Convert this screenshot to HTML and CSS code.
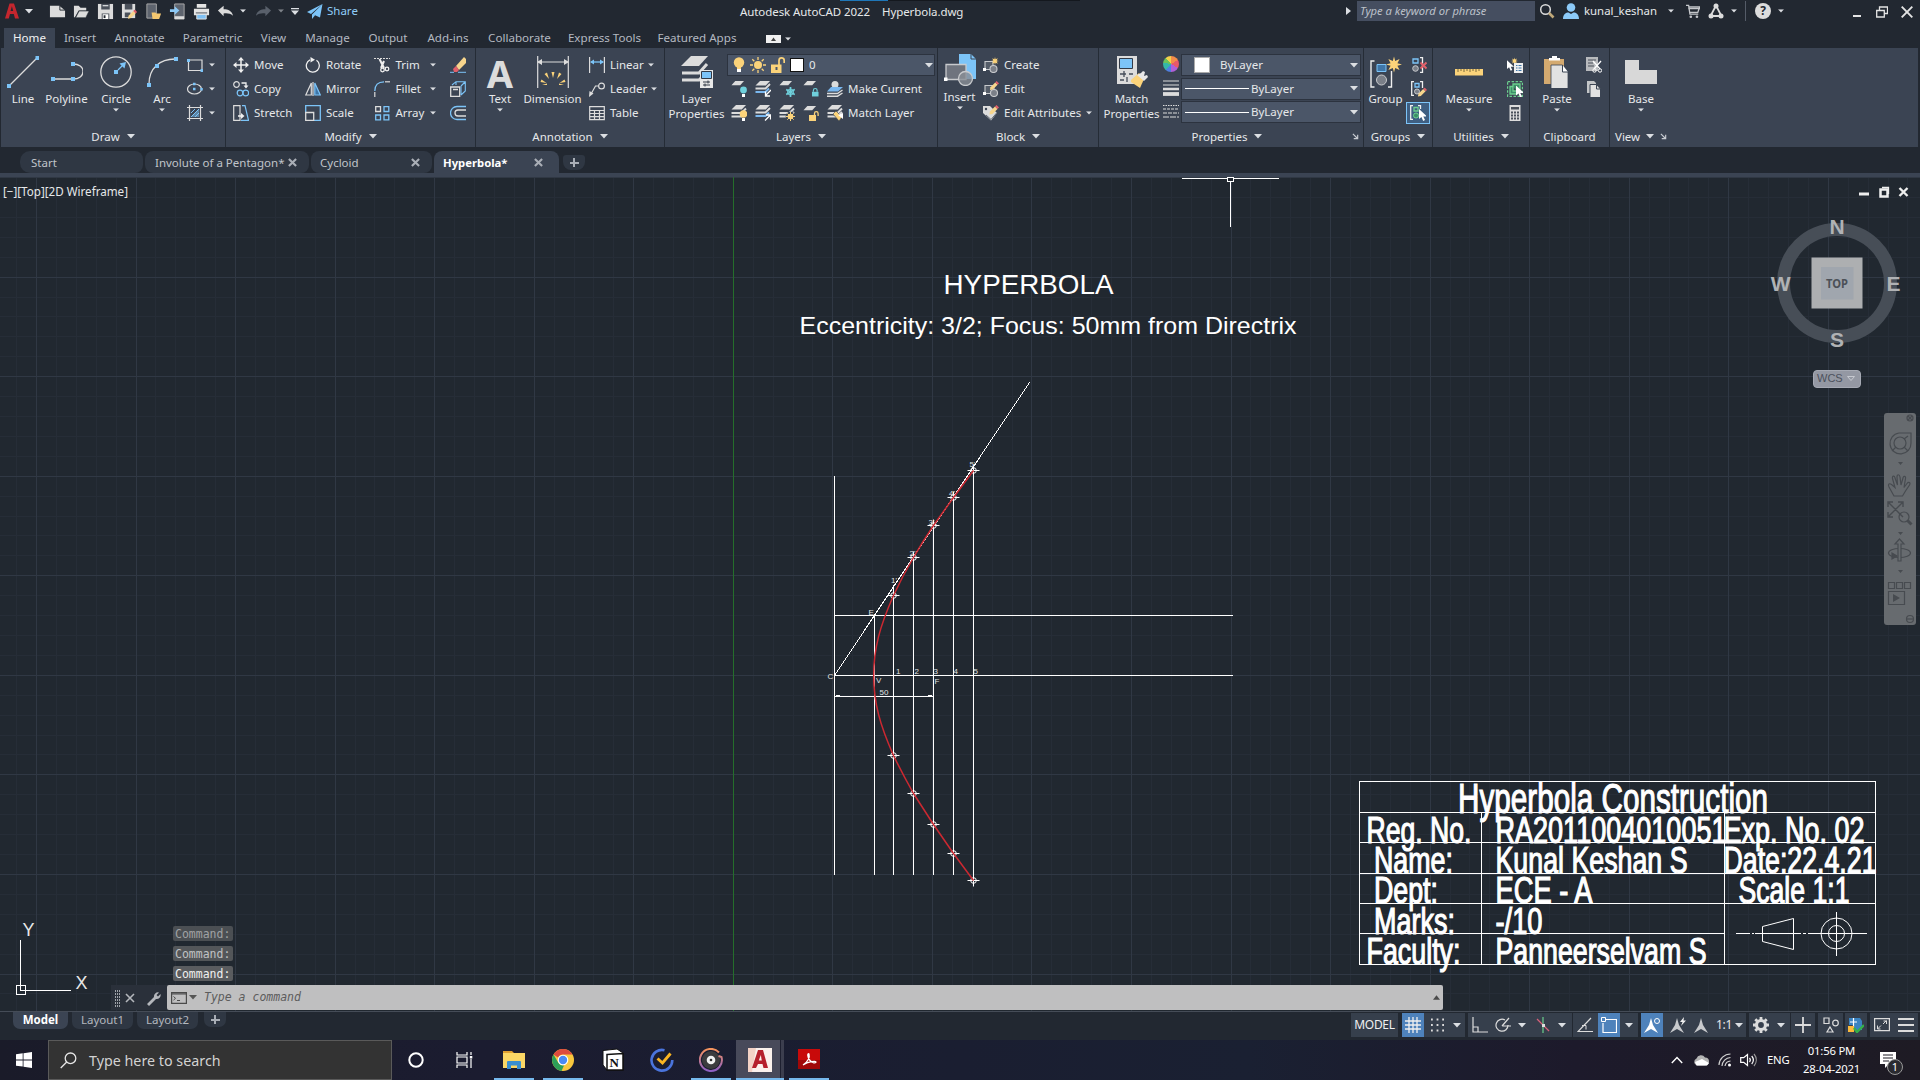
FILE: index.html
```html
<!DOCTYPE html>
<html lang="en">
<head>
<meta charset="utf-8">
<title>Autodesk AutoCAD 2022 - Hyperbola.dwg</title>
<link rel="stylesheet" href="styles.css">
</head>
<body>
<svg class="defs" width="0" height="0">
  <symbol id="dn" viewBox="0 0 8 5"><path d="M0 0h8L4 4.6z" fill="#dcdfe3"/></symbol>
  <symbol id="star" viewBox="0 0 16 16"><path d="M8 0l1.2 4.6L13.6 2.4 11.4 6.8 16 8l-4.600 1.200 2.200 4.400-4.400-2.200L8 16l-1.200-4.600-4.400 2.200 2.200-4.400L0 8l4.600-1.200L2.400 2.400l4.400 2.200z" fill="#fbd37a"/></symbol>
  <symbol id="pencil" viewBox="0 0 10 10"><path d="M1 6.500L6 1.500 8.500 4 3.500 9 .4 9.600z" fill="#f7d58c"/><path d="M6 1.500L7.500 0 10 2.500 8.500 4z" fill="#e0606a"/></symbol>
  <symbol id="sheet" viewBox="0 0 16 16"><path d="M5 1h10l-4.500 5H.5z" fill="#dcdcdc"/></symbol>
  <symbol id="sheets" viewBox="0 0 16 16"><path d="M5 0h10l-4.200 4.500H.5z" fill="#dcdcdc"/><path d="M.5 8h10L15 3.500M.5 11.500h10L15 7" fill="none" stroke="#dcdcdc" stroke-width="2"/></symbol>
  <symbol id="sheetsb" viewBox="0 0 16 16"><path d="M5 0h10l-4.200 4.500H.5z" fill="#dcdcdc"/><path d="M.5 7.500h10L15 3" fill="none" stroke="#dcdcdc" stroke-width="1.800"/><path d="M.5 11h10L14 7.500" fill="none" stroke="#7ab8f0" stroke-width="2"/></symbol>
  <symbol id="launch" viewBox="0 0 8 8"><path d="M1 1l5 5M6.500 2v4.500H2" fill="none" stroke="#c8ccd2" stroke-width="1.300"/></symbol>
  <symbol id="cursor" viewBox="0 0 8 12"><path d="M0 0v10l2.400-2 1.800 4 1.800-.9-1.700-3.700H8z" fill="#fff"/></symbol>
  <symbol id="x" viewBox="0 0 8 8"><path d="M.8.800l6.400 6.400M7.200.800L.8 7.200" stroke="#a9aeb6" stroke-width="1.900" fill="none"/></symbol>
  <symbol id="lock" viewBox="0 0 8 9"><path d="M2 4V2.500a2 2 0 014 0V4" fill="none" stroke="#6fd0dc" stroke-width="1.300"/><rect x=".5" y="4" width="7" height="5" fill="#6fd0dc"/></symbol>
</svg>

<header class="titlebar">
  <div class="qat">
    <svg class="logo" viewBox="0 0 16 18" width="16" height="18"><path d="M1 16.500L5.500 1.500h4.500L15 16.500h-4l-1.200-4.500H6L4.800 16.500z" fill="#c4262e"/><path d="M6.600 9h2.600L7.900 4.200z" fill="#222831"/></svg>
    <svg class="dn" viewBox="0 0 8 5"><use href="#dn"/></svg>
    <svg class="q q-new" viewBox="0 0 18 18"><path d="M1 3h10l6 5v7H1z" fill="#dcdcdc"/><path d="M11.500 3v4.500H17" fill="none" stroke="#222831"/></svg>
    <svg class="q" viewBox="0 0 18 18"><path d="M1 15V3h5l2 2h6v3H6l-4 7z" fill="#dcdcdc"/><path d="M6.500 8.500H17l-3.500 7H2.800z" fill="#dcdcdc" stroke="#222831" stroke-width=".6"/></svg>
    <svg class="q" viewBox="0 0 18 18"><path d="M1 1h16v16H1z" fill="#dcdcdc"/><path d="M4.500 1h9v6h-9zM5 11h8v6H5z" fill="#4a505a"/><path d="M6 12h6v5H6zM6 2.500h6v1H6z" fill="#fff"/><path d="M7 13h2v3H7z" fill="#222831"/></svg>
    <svg class="q" viewBox="0 0 18 18"><path d="M1 1h14v15H1z" fill="#dcdcdc"/><path d="M4 1h8v6H4zM4 10h6v5H4z" fill="#4a505a"/><use href="#pencil" x="7" y="7" width="10" height="10"/></svg>
    <svg class="q" viewBox="0 0 18 18"><path d="M2 1h10v15H2z" fill="#5e646e" stroke="#aaa"/><path d="M7 10h4l1 1h5l-2 6H8z" fill="#f5c870"/></svg>
    <svg class="q" viewBox="0 0 18 18"><path d="M6 1h10v16H6z" fill="#5e646e" stroke="#aaa"/><path d="M6 14h10v3H6z" fill="#dcdcdc"/><path d="M1 6.500h5V3.500L11 8l-5 4.500V9.500H1z" fill="#8cc8f5"/></svg>
    <svg class="q" viewBox="0 0 18 18"><path d="M4 1h10v4H4zM1 6h16v7H1z" fill="#e4e4e4"/><path d="M4 12h10v5H4z" fill="#7fc0f3" stroke="#e4e4e4"/><path d="M3 10h12v1H3z" fill="#4a505a"/></svg>
    <svg class="q q-undo" viewBox="0 0 18 18"><path d="M1 8l6-5v3.500c5 0 9 2 10 7-3-2.500-6-3-10-2.500V14z" fill="#dcdcdc"/></svg>
    <svg class="dn s" viewBox="0 0 8 5"><use href="#dn"/></svg>
    <svg class="q" viewBox="0 0 18 18"><path d="M17 8l-6-5v3.500c-5 0-9 2-10 7 3-2.500 6-3 10-2.500V14z" fill="#59606b"/></svg>
    <svg class="dn s dim" viewBox="0 0 8 5"><use href="#dn"/></svg>
    <svg class="cust" viewBox="0 0 8 7" width="8" height="7"><path d="M0 0h8v1.300H0zM0 2.500h8L4 7z" fill="#dcdfe3"/></svg>
    <svg class="plane" viewBox="0 0 16 15" width="16" height="15"><path d="M15.500 0L0 8l4 2zM15.500 0L5 10.500V15l2.500-3zM15.500 0l-8 11L13 13.500z" fill="#7cc4f8"/></svg>
    <span class="share">Share</span>
  </div>
  <div class="apptitle"><span>Autodesk AutoCAD 2022</span><span>Hyperbola.dwg</span></div>
  <div class="infocenter">
    <svg viewBox="0 0 5 8" width="5" height="8"><path d="M0 0l5 4-5 4z" fill="#dcdfe3"/></svg>
    <div class="keyword">Type a keyword or phrase</div>
    <svg class="mag" viewBox="0 0 16 16" width="16" height="16"><circle cx="6.500" cy="6.500" r="4.800" fill="none" stroke="#dcdcdc" stroke-width="1.500"/><path d="M10 10l4.500 4.500" stroke="#c0a878" stroke-width="2.600"/></svg>
    <svg class="user" viewBox="0 0 16 16" width="16" height="16"><circle cx="8" cy="4.500" r="4.300" fill="#8ccaf8"/><path d="M0 16c0-5 3-6.500 5.500-6.500L8 11l2.500-1.500C13 9.500 16 11 16 16z" fill="#8ccaf8"/></svg>
    <span class="uname">kunal_keshan</span>
    <svg class="dn s" viewBox="0 0 8 5"><use href="#dn"/></svg>
    <svg class="cart" viewBox="0 0 16 16" width="14" height="15"><path d="M0 1h3l1.500 10H14M3.600 4.500H15L13.500 9H4.300M3.300 2.800h12v2h-12z" fill="none" stroke="#c4c6ca" stroke-width="1.500"/><circle cx="5.500" cy="14" r="1.500" fill="#c4c6ca"/><circle cx="12.500" cy="14" r="1.500" fill="#c4c6ca"/></svg>
    <svg class="adsk" viewBox="0 0 16 16" width="16" height="16"><path d="M8 2.500L2.500 13H13.500z" fill="none" stroke="#dcdcdc" stroke-width="1.800"/><circle cx="8" cy="3" r="2.500" fill="#dcdcdc"/><circle cx="3" cy="13" r="2.500" fill="#dcdcdc"/><circle cx="13" cy="13" r="2.500" fill="#dcdcdc"/></svg>
    <svg class="dn s" viewBox="0 0 8 5"><use href="#dn"/></svg>
    <i class="vsep"></i>
    <span class="help">?</span>
    <svg class="dn s" viewBox="0 0 8 5"><use href="#dn"/></svg>
  </div>
  <div class="winbtns">
    <svg viewBox="0 0 12 12" width="12" height="12"><path d="M2 10h8" stroke="#e4e4e4" stroke-width="2"/></svg>
    <svg viewBox="0 0 12 12" width="12" height="12"><path d="M3.500 4V1h8v6.500H8.500M.7 4.500h7.600v6.500H.7z" fill="none" stroke="#e4e4e4" stroke-width="1.300"/></svg>
    <svg viewBox="0 0 12 12" width="12" height="12"><path d="M.7.700l10.600 10.600M11.300.700L.7 11.300" stroke="#e4e4e4" stroke-width="1.900"/></svg>
  </div>
  <i class="topline"></i>
</header>

<nav class="ribtabs">
  <span class="on">Home</span><span>Insert</span><span>Annotate</span><span>Parametric</span><span>View</span><span>Manage</span><span>Output</span><span>Add-ins</span><span>Collaborate</span><span>Express Tools</span><span>Featured Apps</span>
  <span class="ribmin"><svg viewBox="0 0 15 8" width="15" height="8"><path d="M0 0h15v8H0z" fill="#f0f0f0"/><path d="M5 6l2.500-3.500L10 6z" fill="#444"/></svg><svg class="dn s" viewBox="0 0 8 5"><use href="#dn"/></svg></span>
</nav>

<section class="ribbon">
  <div class="panel p-draw">
    <div class="body">
      <div class="big w42"><svg viewBox="0 0 32 32"><path d="M2 30L30 2" stroke="#dcdcdc" stroke-width="1.300"/><path d="M0 28h4v4H0zM28.500 0h4v4h-4z" fill="#7cc4f8"/></svg><span>Line</span></div>
      <div class="big w44"><svg viewBox="0 0 32 32"><path d="M2 23h20c6 0 10-3 10-7.500S28 8 22 8" fill="none" stroke="#dcdcdc" stroke-width="1.300"/><path d="M0 21h4v4H0zM20 21h4v4h-4zM20 6h4v4h-4z" fill="#7cc4f8"/></svg><span>Polyline</span></div>
      <div class="big w56"><svg viewBox="0 0 32 32"><circle cx="16" cy="16" r="15.200" fill="none" stroke="#dcdcdc" stroke-width="1.300"/><path d="M18 14l6-6" stroke="#7cc4f8" stroke-width="1.300"/><path d="M14 14h4v4h-4zM19.500 7.500L26 6l-1.500 6.500z" fill="#7cc4f8"/></svg><span>Circle</span><svg class="dn s" viewBox="0 0 8 5"><use href="#dn"/></svg></div>
      <div class="big w36"><svg viewBox="0 0 32 32"><path d="M3 28C3 12 14 3 29 3" fill="none" stroke="#dcdcdc" stroke-width="1.300"/><path d="M1 27h4v4H1zM9 8h4v4H9zM28 1h4v4h-4z" fill="#7cc4f8"/></svg><span>Arc</span><svg class="dn s" viewBox="0 0 8 5"><use href="#dn"/></svg></div>
      <div class="rows r-draw">
        <div class="row"><svg viewBox="0 0 16 16"><path d="M2 3h13v10.500H1.500V4.500" fill="none" stroke="#dcdcdc" stroke-width="1.200"/><path d="M0 2h3v3H0zM13.500 12h3v3h-3z" fill="#7cc4f8"/></svg><svg class="dn s" viewBox="0 0 8 5"><use href="#dn"/></svg></div>
        <div class="row"><svg viewBox="0 0 16 16"><ellipse cx="7.500" cy="8" rx="7" ry="5" fill="none" stroke="#dcdcdc" stroke-width="1.200"/><path d="M6 6.800h2.500v2.500H6zM6 1.700h2.500v2.500H6zM13.300 7h2.500v2.500h-2.500z" fill="#7cc4f8"/></svg><svg class="dn s" viewBox="0 0 8 5"><use href="#dn"/></svg></div>
        <div class="row"><svg viewBox="0 0 16 16"><path d="M4 12l8-8v8z" fill="#7cc4f8" opacity=".5"/><path d="M4 8l4-4M4 12l8-8M8 12l4-4" stroke="#7cc4f8"/><path d="M0 2.500h16M0 13.500h16M2.500 0v16M13.500 0v16" stroke="#dcdcdc" stroke-width="1.200"/></svg><svg class="dn s" viewBox="0 0 8 5"><use href="#dn"/></svg></div>
      </div>
    </div>
    <div class="ptitle">Draw<svg class="dn" viewBox="0 0 8 5"><use href="#dn"/></svg></div>
  </div>

  <div class="panel p-modify">
    <div class="body">
      <div class="rows w72">
        <div class="row"><svg viewBox="0 0 16 16"><path d="M8 1v14M1 8h14" stroke="#f0f0f0" stroke-width="1.500"/><path d="M8 0l3 3.500H5zM8 16l3-3.500H5zM0 8l3.500-3v6zM16 8l-3.500-3v6z" fill="#f0f0f0"/></svg><span>Move</span></div>
        <div class="row"><svg viewBox="0 0 16 16"><circle cx="3.500" cy="3.500" r="2.800" fill="none" stroke="#dcdcdc" stroke-width="1.200"/><path d="M8.500 2h4.500v3" fill="none" stroke="#f0f0f0" stroke-width="1.300"/><path d="M10.500 4.500h5L13 7.500z" fill="#f0f0f0"/><circle cx="7" cy="12" r="2.800" fill="none" stroke="#7cc4f8" stroke-width="1.200"/><circle cx="12.800" cy="12" r="2.800" fill="none" stroke="#7cc4f8" stroke-width="1.200"/></svg><span>Copy</span></div>
        <div class="row"><svg viewBox="0 0 16 16"><path d="M.7.700H7v14.600H.7z" fill="none" stroke="#dcdcdc" stroke-width="1.200"/><path d="M9 .7h3l3.500 14.600H8" fill="none" stroke="#7cc4f8" stroke-width="1.200"/><path d="M5 11h4" stroke="#f0f0f0" stroke-width="1.500"/><path d="M8 8l3.500 3L8 14z" fill="#f0f0f0"/></svg><span>Stretch</span></div>
      </div>
      <div class="rows w69">
        <div class="row"><svg viewBox="0 0 16 16"><path d="M5 2.800a6.500 6.500 0 106.500.5" fill="none" stroke="#f0f0f0" stroke-width="1.300"/><path d="M5.500 0v5.500L10 2.700z" fill="#f0f0f0"/></svg><span>Rotate</span></div>
        <div class="row"><svg viewBox="0 0 16 16"><path d="M6.300 2v12H.8zM8 1v14" fill="none" stroke="#dcdcdc" stroke-width="1.200"/><path d="M9.800 2v12h5.500z" fill="#3f76a8" stroke="#7cc4f8" stroke-width="1.200"/></svg><span>Mirror</span></div>
        <div class="row"><svg viewBox="0 0 16 16"><path d="M.7 8V.7h14.600v14.600H9" fill="none" stroke="#7cc4f8" stroke-width="1.300"/><path d="M.7 7.500h8v8h-8z" fill="none" stroke="#dcdcdc" stroke-width="1.300"/></svg><span>Scale</span></div>
      </div>
      <div class="rows w76">
        <div class="row"><svg viewBox="0 0 16 16"><path d="M0 1.500h16" stroke="#dcdcdc" stroke-dasharray="2 1"/><path d="M5.500 2l4.500 9M10 4l-3 7" stroke="#f0f0f0" stroke-width="2"/><circle cx="8.500" cy="13" r="1.800" fill="none" stroke="#f0f0f0" stroke-width="1.300"/><circle cx="13" cy="12" r="1.800" fill="none" stroke="#f0f0f0" stroke-width="1.300"/></svg><span>Trim</span><svg class="dn s e" viewBox="0 0 8 5"><use href="#dn"/></svg></div>
        <div class="row"><svg viewBox="0 0 16 16"><path d="M.8 16v-5" stroke="#dcdcdc" stroke-width="1.200"/><path d="M.8 10C.8 4 4 .8 10 .8" fill="none" stroke="#7cc4f8" stroke-width="1.300"/><path d="M11 .8h5" stroke="#dcdcdc" stroke-width="1.200"/></svg><span>Fillet</span><svg class="dn s e" viewBox="0 0 8 5"><use href="#dn"/></svg></div>
        <div class="row"><svg viewBox="0 0 16 16" fill="none" stroke-width="1.300"><path d="M1.700 1.700h4.800v4.800H1.700z" stroke="#dcdcdc"/><path d="M10 1.700h4.800v4.800H10zM1.700 10h4.800v4.800H1.700zM10 10h4.800v4.800H10z" stroke="#7cc4f8"/></svg><span>Array</span><svg class="dn s e" viewBox="0 0 8 5"><use href="#dn"/></svg></div>
      </div>
      <div class="rows">
        <div class="row"><svg viewBox="0 0 16 16"><path d="M0 15.300h4M8 15.300h8" stroke="#7cc4f8"/><path d="M6 9L14 0l2 2v4L9 13z" fill="#f7d58c"/><path d="M3 12l3-3 3 4-2 2H4z" fill="#e0606a"/></svg></div>
        <div class="row"><svg viewBox="0 0 16 16" fill="none"><path d="M.7 6h9v9.300h-9zM3 8.500h5" stroke="#dcdcdc" stroke-width="1.300"/><path d="M2 4l4-3.300h9.300V10L11 14M6 .7V4M11 5l4-4M11 5v9" stroke="#7cc4f8" stroke-width="1.100"/></svg></div>
        <div class="row"><svg viewBox="0 0 16 16" fill="none"><path d="M16 1.500H7a6.500 6.500 0 000 13h9" stroke="#7cc4f8" stroke-width="1.300"/><path d="M16 5H8a3 3 0 000 6h8" stroke="#dcdcdc" stroke-width="1.300"/></svg></div>
      </div>
    </div>
    <div class="ptitle">Modify<svg class="dn" viewBox="0 0 8 5"><use href="#dn"/></svg></div>
  </div>

  <div class="panel p-anno">
    <div class="body">
      <div class="big w48"><b class="bigA">A</b><span>Text</span><svg class="dn s" viewBox="0 0 8 5"><use href="#dn"/></svg></div>
      <div class="big w57"><svg viewBox="0 0 32 32"><path d="M.7 0v32M31.300 0v32M1 6h30" stroke="#dcdcdc" stroke-width="1.200"/><path d="M0 6l5-3v6zM32 6l-5-3v6z" fill="#dcdcdc"/><path d="M16 22l-1.500-6h3zM12 23l-4.500-5 2.500-1.500zM20 23l4.500-5-2.500-1.500zM9.500 27l-6-1 1-2.500zM22.500 27l6-1-1-2.500zM5 29h5v-1.500zM27 29h-5v-1.500z" fill="#fbd37a"/></svg><span>Dimension</span></div>
      <div class="rows">
        <div class="row"><svg viewBox="0 0 16 16"><path d="M.6 0v16M15.400 0v16" stroke="#dcdcdc" stroke-width="1.200"/><path d="M2 5h12" stroke="#7cc4f8" stroke-width="1.300"/><path d="M1 5l4-2.500v5zM15 5l-4-2.500v5z" fill="#7cc4f8"/></svg><span>Linear</span><svg class="dn s e2 e-lin" viewBox="0 0 8 5"><use href="#dn"/></svg></div>
        <div class="row"><svg viewBox="0 0 16 16"><circle cx="12.500" cy="5" r="2.900" fill="none" stroke="#dcdcdc" stroke-width="1.200"/><path d="M9.500 5H6.500L2 13" fill="none" stroke="#dcdcdc" stroke-width="1.200"/><path d="M0 16l.5-6 4 2.500z" fill="#dcdcdc"/></svg><span>Leader</span><svg class="dn s e2" viewBox="0 0 8 5"><use href="#dn"/></svg></div>
        <div class="row"><svg viewBox="0 0 16 16" fill="none"><path d="M.7 1.700h14.600v13H.7zM.7 5.500h14.600M.7 8.500h14.600M.7 11.700h14.600M5.500 5v10M10.500 5v10" stroke="#dcdcdc" stroke-width="1.200"/></svg><span>Table</span></div>
      </div>
    </div>
    <div class="ptitle">Annotation<svg class="dn" viewBox="0 0 8 5"><use href="#dn"/></svg></div>
  </div>

  <div class="panel p-layers">
    <div class="body">
      <div class="big w64"><svg viewBox="0 0 32 32"><path d="M10 0h17L18 10H0z" fill="#dcdcdc"/><path d="M1 17h17l8-9M1 24h17l3-3" fill="none" stroke="#dcdcdc" stroke-width="3"/><path d="M19 14h13v18H19z" fill="#e8e8e8"/><path d="M20.500 15.500h10v7h-10z" fill="#7cc4f8" stroke="#333b47"/><path d="M22 26h7M22 29h7M27 24.500v3M24 27.500v3" stroke="#333b47"/></svg><span>Layer<br>Properties</span></div>
      <div class="layerside">
        <div class="combo layercombo">
          <svg viewBox="0 0 12 16" width="12" height="16"><circle cx="6" cy="5.500" r="5.200" fill="#fbd37a"/><path d="M4 9h4v3H4z" fill="#fbd37a"/><path d="M4 12h4v3H4z" fill="#fff"/></svg>
          <svg viewBox="0 0 16 16" width="16" height="16"><circle cx="8" cy="8" r="4" fill="#fbd37a"/><path d="M8 0v3M8 13v3M0 8h3M13 8h3M2.300 2.300l2 2M11.700 11.700l2 2M13.700 2.300l-2 2M4.300 11.700l-2 2" stroke="#fbd37a" stroke-width="1.300"/></svg>
          <svg viewBox="0 0 14 16" width="14" height="16"><path d="M0 7.500h10.500V16H0z" fill="#fbd37a"/><path d="M8 8V3.500a2.600 2.600 0 015.200 0V6" fill="none" stroke="#fbd37a" stroke-width="1.700"/><path d="M4.500 10h2v3h-2z" fill="#4b5668"/></svg>
          <i class="swatch"></i><span>0</span><svg class="dn end" viewBox="0 0 8 5"><use href="#dn"/></svg>
        </div>
        <div class="lrow">
          <svg viewBox="0 0 16 16"><use href="#sheet" width="14" height="14" y="-1"/><circle cx="12.500" cy="9" r="3.400" fill="#6fd0dc"/><path d="M11 13h3v3h-3z" fill="#fff"/></svg>
          <svg viewBox="0 0 16 16"><use href="#sheetsb"/><path d="M16 9l-5 5M10.500 10.500V15H15" fill="none" stroke="#fff" stroke-width="1.300"/></svg>
          <svg viewBox="0 0 16 16"><use href="#sheet" width="14" height="14" y="-1"/><path d="M11.500 6v10M7.200 8.500l8.600 5M7.200 13.500l8.600-5" stroke="#6fd0dc" stroke-width="1.700"/><circle cx="11.500" cy="11" r="3" fill="none" stroke="#6fd0dc"/></svg>
          <svg viewBox="0 0 16 16"><use href="#sheet" width="14" height="14" y="-1"/><use href="#lock" x="8.500" y="6.500" width="7.500" height="9.500"/></svg>
          <svg viewBox="0 0 16 16"><circle cx="8" cy="3.500" r="3.500" fill="#dcdcdc"/><path d="M4 6h12l-5 4.500H0z" fill="#7ab8f0"/><path d="M0 12.500h10.500L15.500 9M0 15.200h10.500L15.500 12" fill="none" stroke="#dcdcdc" stroke-width="1.400"/></svg>
          <span>Make Current</span>
        </div>
        <div class="lrow">
          <svg viewBox="0 0 16 16"><use href="#sheets"/><circle cx="12.500" cy="9" r="3.800" fill="#fbd37a"/><path d="M11 13h3v3h-3z" fill="#fff"/></svg>
          <svg viewBox="0 0 16 16"><use href="#sheetsb"/><path d="M10 15.500l5-5M11 10h4.500v4.500" fill="none" stroke="#fff" stroke-width="1.300"/></svg>
          <svg viewBox="0 0 16 16"><use href="#sheets"/><circle cx="11.500" cy="11.500" r="4.800" fill="#3b4453"/><circle cx="11.500" cy="11.500" r="2.800" fill="#fbd37a"/><path d="M11.500 7v9M7 11.500h9M8.300 8.300l6.400 6.400M14.700 8.300l-6.400 6.400" stroke="#fbd37a"/></svg>
          <svg viewBox="0 0 16 16"><use href="#sheet" width="14" height="14" y="0"/><path d="M6 10h7v6H6z" fill="#fbd37a"/><path d="M11.500 10V8.500a1.800 1.800 0 013.600 0V11" fill="none" stroke="#fbd37a" stroke-width="1.300"/></svg>
          <svg viewBox="0 0 16 16"><use href="#sheets"/><path d="M6 9l3-3 6 6-3 4z" fill="#fbd37a" stroke="#3b4453" stroke-width=".6"/><path d="M11 10l5-2v6z" fill="#fff"/></svg>
          <span>Match Layer</span>
        </div>
      </div>
    </div>
    <div class="ptitle">Layers<svg class="dn" viewBox="0 0 8 5"><use href="#dn"/></svg></div>
  </div>

  <div class="panel p-block">
    <div class="body">
      <div class="big w38 up"><svg viewBox="0 0 32 32"><path d="M15 0h12l5 5v20H15z" fill="#7cc4f8"/><path d="M27 0v5h5" fill="none" stroke="#3b4453"/><path d="M2 10.500h20v15H2z" fill="#6f747e" stroke="#c8cacd" stroke-width="1.300"/><circle cx="21.500" cy="24.500" r="7" fill="#8a8e96" fill-opacity=".8" stroke="#c8cacd" stroke-width="1.300"/><path d="M0 23.500h3.500V27H0z" fill="#fff"/></svg><span>Insert</span><svg class="dn s" viewBox="0 0 8 5"><use href="#dn"/></svg></div>
      <div class="rows">
        <div class="row"><svg viewBox="0 0 16 16"><path d="M2 4.500h8v8H2z" fill="#555d69" stroke="#c8cacd" stroke-width="1.100"/><circle cx="10.500" cy="12" r="3.500" fill="#7a7f88" stroke="#c8cacd" stroke-width="1.100"/><path d="M0 11h3v3H0z" fill="#fff"/><use href="#star" x="8" y="0" width="8" height="8"/></svg><span>Create</span></div>
        <div class="row"><svg viewBox="0 0 16 16"><path d="M2 4.500h9v8H2z" fill="#555d69" stroke="#c8cacd" stroke-width="1.100"/><circle cx="11" cy="12" r="3.500" fill="#7a7f88" stroke="#c8cacd" stroke-width="1.100"/><path d="M0 11h3v3H0z" fill="#fff"/><use href="#pencil" x="6.500" y="0" width="9.500" height="9.500"/></svg><span>Edit</span></div>
        <div class="row"><svg viewBox="0 0 16 16"><path d="M0 1h7l7 7-6 7.500L0 8z" fill="#dcdcdc"/><path d="M3 10l5 4.500 6-7" fill="none" stroke="#444c59" stroke-width=".8"/><circle cx="3" cy="4" r="1.200" fill="#3b4453"/><use href="#pencil" x="6" y="0" width="10" height="10"/></svg><span>Edit Attributes</span><svg class="dn s e3" viewBox="0 0 8 5"><use href="#dn"/></svg></div>
      </div>
    </div>
    <div class="ptitle">Block<svg class="dn" viewBox="0 0 8 5"><use href="#dn"/></svg></div>
  </div>

  <div class="panel p-props">
    <div class="body">
      <div class="big w65"><svg viewBox="0 0 32 32"><path d="M1 0h20v28H1z" fill="#dcdcdc"/><path d="M3.500 2.500h13v10h-13z" fill="#7cc4f8" stroke="#333b47"/><path d="M4 18h6M13 18h4M4 24h4M8 15v6M11 21v5" stroke="#444c59" stroke-width="1.300"/><path d="M15 24l8-7 5 6-4 9-9-6z" fill="#fbd37a"/><path d="M21 19l4-2 2-2 2 1-1 4 3-1 1 2-4 4z" fill="#e8e8e8"/></svg><span>Match<br>Properties</span></div>
      <div class="icons3">
        <i class="wheel"></i>
        <svg viewBox="0 0 16 16"><path d="M0 1h16M0 5h16" stroke="#dcdcdc" stroke-width="1.200"/><path d="M0 9h16" stroke="#dcdcdc" stroke-width="2.500"/><path d="M0 14h16" stroke="#dcdcdc" stroke-width="3.800"/></svg>
        <svg viewBox="0 0 16 16"><path d="M0 1.500h16" stroke="#dcdcdc" stroke-dasharray="1.500 1"/><path d="M0 5h16" stroke="#dcdcdc" stroke-dasharray="3 1"/><path d="M0 9h16" stroke="#dcdcdc" stroke-dasharray="4 1"/><path d="M0 13h16" stroke="#dcdcdc" stroke-dasharray="6 1"/></svg>
      </div>
      <div class="combos">
        <div class="combo"><i class="swatch big2"></i><span>ByLayer</span><svg class="dn end" viewBox="0 0 8 5"><use href="#dn"/></svg></div>
        <div class="combo"><i class="ln"></i><span>ByLayer</span><svg class="dn end" viewBox="0 0 8 5"><use href="#dn"/></svg></div>
        <div class="combo"><i class="ln"></i><span>ByLayer</span><svg class="dn end" viewBox="0 0 8 5"><use href="#dn"/></svg></div>
      </div>
    </div>
    <div class="ptitle has-launch">Properties<svg class="dn" viewBox="0 0 8 5"><use href="#dn"/></svg><svg class="launch" viewBox="0 0 8 8"><use href="#launch"/></svg></div>
  </div>

  <div class="panel p-groups">
    <div class="body">
      <div class="big w43"><svg viewBox="0 0 32 32"><path d="M4.500 5H1v26h3.500M18 31h3.500V15" fill="none" stroke="#f0f0f0" stroke-width="1.400"/><path d="M7 8.500h9v7H7z" fill="#3f76a8" stroke="#7cc4f8"/><circle cx="11.500" cy="24" r="5" fill="#7a7f88" stroke="#c8cacd"/><use href="#star" x="16" y="0" width="16" height="17"/></svg><span>Group</span></div>
      <div class="rows r-c24">
        <div class="row"><svg viewBox="0 0 16 16" fill="none"><path d="M2 2h5v4H2z" stroke="#7cc4f8" stroke-width="1.300"/><circle cx="4.500" cy="11.500" r="2.800" stroke="#c8cacd" fill="#7a7f88"/><path d="M9 .7h2.500v14.600H9" stroke="#f0f0f0" stroke-width="1.300"/><path d="M9.500 5.500l6 6M15.500 5.500l-6 6" stroke="#e0606a" stroke-width="2"/></svg></div>
        <div class="row"><svg viewBox="0 0 16 16" fill="none"><path d="M3 .7H.7v13.600H3M9 .7h2.500V7" stroke="#f0f0f0" stroke-width="1.300"/><path d="M4 2.500h4v3.500H4z" stroke="#7cc4f8" stroke-width="1.300"/><circle cx="6" cy="10.500" r="2.500" stroke="#c8cacd" fill="#7a7f88"/><use href="#pencil" x="6.500" y="6.500" width="9.500" height="9.500"/></svg></div>
        <div class="row sel"><svg viewBox="0 0 16 16" fill="none"><path d="M3 .7H.7v13.600H3M8 .7h2.500V4" stroke="#f0f0f0" stroke-width="1.300"/><path d="M4 2.500h4v3.500H4z" stroke="#6ccf8e" stroke-width="1.300"/><circle cx="6" cy="10.500" r="2.500" stroke="#6ccf8e" fill="#3d8f68"/><use href="#cursor" x="9" y="4" width="8" height="12"/></svg></div>
      </div>
    </div>
    <div class="ptitle">Groups<svg class="dn" viewBox="0 0 8 5"><use href="#dn"/></svg></div>
  </div>

  <div class="panel p-utils">
    <div class="body">
      <div class="big w72c"><svg viewBox="0 0 32 32"><path d="M2 13h28v6.500H2z" fill="#fbd37a"/><path d="M5 13v3M8 13v2M11 13v3M14 13v2M17 13v3M20 13v2M23 13v3M26 13v2" stroke="#7a6a3a"/></svg><span>Measure</span><svg class="dn s" viewBox="0 0 8 5"><use href="#dn"/></svg></div>
      <div class="rows r-c20">
        <div class="row"><svg viewBox="0 0 16 16"><use href="#star" x="4" y="0" width="7" height="8"/><use href="#cursor" x="0" y="3" width="7" height="11"/><path d="M7 6h9v10H7z" fill="#eee"/><path d="M9 8.500h1.500M9 11h1.500M9 13.500h1.500M11.500 8.500h3M11.500 11h3M11.500 13.500h3" stroke="#3f76a8" stroke-width="1.200"/></svg></div>
        <div class="row"><svg viewBox="0 0 16 16" fill="none"><path d="M.6.600h14.800v14.800H.6z" stroke="#6ccf8e" stroke-dasharray="2.500 1.500" stroke-width="1.200"/><path d="M6 3h7v7H6zM6 5.500H3V13h7v-3" stroke="#6ccf8e" fill="#3d8f68" stroke-width="1.300"/><use href="#cursor" x="9" y="4.500" width="8" height="12"/></svg></div>
        <div class="row"><svg viewBox="0 0 16 16"><path d="M2.500 0h11v16h-11z" fill="#dcdcdc"/><path d="M4 2h8v2.500H4z" fill="#4a505a"/><path d="M4 6.500h2v2H4zM7 6.500h2v2H7zM10 6.500h2v2h-2zM4 9.500h2v2H4zM7 9.500h2v2H7zM10 9.500h2v2h-2zM4 12.500h2v2H4zM7 12.500h2v2H7zM10 12.500h2v2h-2z" fill="#4a505a"/></svg></div>
      </div>
    </div>
    <div class="ptitle">Utilities<svg class="dn" viewBox="0 0 8 5"><use href="#dn"/></svg></div>
  </div>

  <div class="panel p-clip">
    <div class="body">
      <div class="big w55"><svg viewBox="0 0 32 32"><path d="M3 3h20v25H3z" fill="#d4aa70"/><path d="M8 4.500V2h3V0h5v2h3v2.500z" fill="#fff"/><path d="M10 9h11.500l5.500 7v16.500H10z" fill="#e2e2e2" stroke="#3b4453" stroke-width=".8"/><path d="M21.500 9v7H27" fill="#fff" stroke="#3b4453"/></svg><span>Paste</span><svg class="dn s" viewBox="0 0 8 5"><use href="#dn"/></svg></div>
      <div class="rows r-c20">
        <div class="row"><svg viewBox="0 0 16 16"><path d="M0 0h12v14H0z" fill="#b8babd"/><path d="M2 3h8M2 6h5M2 9h6" stroke="#4a505a"/><path d="M7 4l7 8M15 4L8 12" stroke="#fff" stroke-width="1.300"/><circle cx="8.500" cy="13.500" r="1.700" fill="none" stroke="#fff"/><circle cx="14" cy="13.500" r="1.700" fill="none" stroke="#fff"/></svg></div>
        <div class="row"><svg viewBox="0 0 16 16"><path d="M1 0h7l2 2v10H1z" fill="#c4c6c8"/><path d="M4 3.500h6.500L14.500 8v8.500H4z" fill="#e2e2e2" stroke="#3b4453"/><path d="M10.500 3.500V8h4" fill="none" stroke="#3b4453"/></svg></div>
      </div>
    </div>
    <div class="ptitle">Clipboard</div>
  </div>

  <div class="panel p-view">
    <div class="body">
      <div class="big w62"><svg viewBox="0 0 32 32"><path d="M0 4h14v10h18v14H0z" fill="#d8d8d8"/></svg><span>Base</span><svg class="dn s" viewBox="0 0 8 5"><use href="#dn"/></svg></div>
    </div>
    <div class="ptitle">View<svg class="dn" viewBox="0 0 8 5"><use href="#dn"/></svg><svg class="launch" viewBox="0 0 8 8"><use href="#launch"/></svg></div>
  </div>
</section>

<nav class="filetabs">
  <div class="ftab ft1">Start</div>
  <div class="ftab ft2">Involute of a Pentagon*<svg viewBox="0 0 8 8"><use href="#x"/></svg></div>
  <div class="ftab ft3">Cycloid<svg viewBox="0 0 8 8"><use href="#x"/></svg></div>
  <div class="ftab ft4 on">Hyperbola*<svg viewBox="0 0 8 8"><use href="#x"/></svg></div>
  <div class="ftab plus"><i class="pl"></i></div>
</nav>

<main class="viewport">
  <svg class="drawing" viewBox="0 177 1920 834" width="1920" height="834">
    <g shape-rendering="crispEdges" fill="none">
      <path id="minor" stroke="#262d37"/>
      <path id="major" stroke="#303844"/>
      <path d="M733.500 177v834" stroke="#256e2b"/>
    </g>
    <text x="3" y="195.500" class="vc" textLength="125" lengthAdjust="spacingAndGlyphs">[−][Top][2D Wireframe]</text>
    <g shape-rendering="crispEdges" fill="none" stroke="#fff">
      <path d="M1182 178.500h97M1230.500 182v45"/><path d="M1227.500 177.500h6v4h-6z" fill="#222831"/>
      <path d="M834.500 476v399M834 615.500h399M834 675.500h399M834 696.500h100"/>
      <path d="M874.500 615v260M893.500 585v290M913.500 557v318M933.500 525v350M953.500 497v378M973.500 470v410"/>
      <path d="M834.500 675.500L1029.500 382.500"/>
      <path d="M20.500 940v50.500h50.500M16.500 985.500h9v9h-9z"/>
    </g>
    <g id="marks" fill="none" stroke="#fff"></g>
    <path d="M973.500 470.500L953.500 497.500L933.500 525.500Q923 541 913.500 557.500Q903 575 893.500 595.500C880 626 873.700 648 873.700 675.500S880 725 893.500 755.500Q902 773 913.500 793.500L933.500 824.500L953.500 853.500L973.500 880.500" fill="none" stroke="#cc2831" stroke-width="1.500"/>
    <text class="head" x="943.500" y="293.500" textLength="170" lengthAdjust="spacingAndGlyphs">HYPERBOLA</text>
    <text class="sub" x="799.500" y="333.500" textLength="497" lengthAdjust="spacingAndGlyphs">Eccentricity: 3/2; Focus: 50mm from Directrix</text>
    <g class="pt">
      <text x="827.500" y="678.500">C</text><text x="868.500" y="614.500">E</text><text x="876" y="683">V</text><text x="934.500" y="684">F</text><text x="879.500" y="695">50</text>
      <text x="896" y="674">1</text><text x="914.500" y="674">2</text><text x="933.500" y="674">3</text><text x="953.500" y="674">4</text><text x="973.500" y="674">5</text>
      <text x="891" y="583">1'</text><text x="909.500" y="556">2'</text><text x="928.500" y="525">3'</text><text x="949" y="496">4'</text><text x="969.500" y="467">5'</text>
    </g>
    <path d="M836 695.500h4M928 695.500h4" stroke="#fff"/>
    <g class="ucs"><text x="22.500" y="936">Y</text><text x="75.500" y="988.500">X</text></g>
    <g shape-rendering="crispEdges" fill="none" stroke="#fff">
      <path d="M1359.500 781.500h516v183h-516zM1359 812.500h516M1359 842.500h516M1359 873.500h516M1359 903.500h516M1359 933.500h365M1481.500 812v152M1724.500 812v152"/>
      <path d="M1736 933.500h14M1751.500 933.500h2M1755 933.500h46M1803 933.500h3M1808 933.500h59M1836.500 912v44"/>
    </g>
    <path d="M1762.500 926.500L1793.500 918.500v31L1762.500 941.500z" fill="none" stroke="#fff"/>
    <circle cx="1836.500" cy="933.500" r="15.500" fill="none" stroke="#fff"/><circle cx="1836.500" cy="933.500" r="8" fill="none" stroke="#fff"/>
    <g class="tb">
      <text class="tbh" x="1458" y="813" textLength="310" lengthAdjust="spacingAndGlyphs">Hyperbola Construction</text>
      <text x="1366.500" y="842.500" textLength="105" lengthAdjust="spacingAndGlyphs">Reg. No.</text>
      <text x="1374" y="872.500" textLength="79" lengthAdjust="spacingAndGlyphs">Name:</text>
      <text x="1374" y="903" textLength="64" lengthAdjust="spacingAndGlyphs">Dept:</text>
      <text x="1374" y="933.500" textLength="81" lengthAdjust="spacingAndGlyphs">Marks:</text>
      <text x="1366.500" y="963.500" textLength="94" lengthAdjust="spacingAndGlyphs">Faculty:</text>
      <text x="1495.500" y="842.500" textLength="231" lengthAdjust="spacingAndGlyphs">RA2011004010051</text>
      <text x="1495.500" y="872.500" textLength="192" lengthAdjust="spacingAndGlyphs">Kunal Keshan S</text>
      <text x="1495.500" y="903" textLength="97" lengthAdjust="spacingAndGlyphs">ECE - A</text>
      <text x="1495.500" y="933.500" textLength="47" lengthAdjust="spacingAndGlyphs">-/10</text>
      <text x="1495.500" y="963.500" textLength="211" lengthAdjust="spacingAndGlyphs">Panneerselvam S</text>
      <text x="1723.500" y="842.500" textLength="141" lengthAdjust="spacingAndGlyphs">Exp. No. 02</text>
      <text x="1723.500" y="872.500" textLength="153" lengthAdjust="spacingAndGlyphs">Date:22.4.21</text>
      <text x="1738.500" y="903" textLength="111" lengthAdjust="spacingAndGlyphs">Scale 1:1</text>
    </g>
    <g fill="none" stroke="#eee" stroke-width="3"><path d="M1859 194h10"/><path d="M1880.500 189.500h7v7h-7z" stroke-width="2.500"/><path d="M1882 187.500h6.500v6.500" stroke-width="1.300"/><path d="M1899.500 188l8 8M1907.500 188l-8 8" stroke-width="2.400"/></g>
    <circle cx="1837" cy="283" r="53.500" fill="none" stroke="#474e57" stroke-width="13"/>
    <path d="M1811.500 257.500h51v51h-51z" fill="#adafb1"/><path d="M1821 267h32.500v32.500H1821z" fill="#a0a6ae"/>
    <text class="cube" x="1826" y="288" textLength="22" lengthAdjust="spacingAndGlyphs">TOP</text>
    <g class="nesw"><text x="1837" y="234">N</text><text x="1837" y="347">S</text><text x="1780.700" y="290.500">W</text><text x="1893.500" y="290.500">E</text></g>
    <rect x="1813.500" y="370.500" width="47" height="17" rx="3.500" fill="#9498a3" stroke="#a6aab4"/>
    <text class="wcs" x="1817" y="382">WCS</text><path d="M1847.500 376.500h7l-3.500 4z" fill="none" stroke="#c6c9d0"/>
    <rect x="1884" y="413" width="32" height="212" rx="3" fill="#676b6f"/>
    <g fill="none" stroke="#474b50" stroke-width="1.200">
      <circle cx="1910" cy="418" r="3"/><path d="M1908 416l4 4M1912 416l-4 4"/>
      <path d="M1911 433h-12a10.500 10.500 0 1012 10z"/><circle cx="1900" cy="443" r="6"/><path d="M1892 451l4-4M1904 447l4 4M1904 439l4-3"/>
      <path d="M1894 496l-5-9c-1.500-3 .5-4 2.500-2.500l3.500 3-2.500-9c-.5-3 2-3 2.500-.5l2.500 7-.5-8c0-3 2.500-3 3 0l1 8 2-7c.5-2.500 3-2 2.500.5l-1.500 9 3-4c1.500-2 4-1 2.500 1.500l-4 6-3 5h-7z"/>
      <path d="M1888 502l15 15M1903 502l-15 15M1888 507v-5h5M1898 502h5v5M1888 512v5h5" stroke-width="1.400"/><circle cx="1904" cy="517" r="5"/><path d="M1907.500 520.500l4 4" stroke-width="3"/>
      <ellipse cx="1899.500" cy="553" rx="11" ry="4.500"/><path d="M1898 561v-17h-3l4.500-5 4.500 5h-3v17z" fill="#676b6f"/><path d="M1892 553v6l5-3z" fill="#474b50"/>
      <path d="M1888.500 582.500h6v6h-6zM1896.500 582.500h6v6h-6zM1904.500 582.500h6v6h-6zM1888.500 591.500h16v13h-16z"/>
      <circle cx="1910" cy="619" r="3.500"/><path d="M1907 619h6"/>
    </g>
    <path d="M1898 462h5l-2.500 3zM1898 532h5l-2.500 3zM1898 570h5l-2.500 3zM1893 594v8l7-4z" fill="#474b50"/>
  </svg>

  <div class="history"><span>Command:</span><span>Command:</span><span>Command:</span></div>
  <div class="cmd">
    <i class="grip"></i>
    <svg viewBox="0 0 10 10" width="10" height="10"><path d="M1 1l8 8M9 1L1 9" stroke="#b4b7bc" stroke-width="1.600"/></svg>
    <svg class="wrench" viewBox="0 0 14 14" width="14" height="14"><path d="M0 12l7-7a4 4 0 015-4.500L9.500 3l1.500 1.500L13.500 2A4 4 0 019 7l-7 7z" fill="#b4b7bc"/></svg>
    <div class="cmdin">
      <svg viewBox="0 0 16 12" width="16" height="12"><path d="M.6.600h14.800v10.800H.6zM.6 2h14.800" fill="none" stroke="#4a4a4a" stroke-width="1.200"/><path d="M2.500 4.500l2 1.800-2 1.800M6 8.500h3" fill="none" stroke="#4a4a4a"/></svg>
      <svg class="dk" viewBox="0 0 8 5" width="8" height="5"><path d="M0 0h8L4 4.500z" fill="#555"/></svg>
      <span>Type a command</span>
      <svg class="dk up" viewBox="0 0 8 5" width="7" height="5"><path d="M0 5h8L4 0z" fill="#4a4a4a"/></svg>
    </div>
  </div>
</main>

<footer class="layoutbar">
  <div class="ltabs"><span class="lt on">Model</span><span class="lt">Layout1</span><span class="lt">Layout2</span><span class="lt plus"><i class="pl"></i></span></div>
  <div class="status">
    <div class="sg s1">MODEL</div>
    <div class="sg s2"><i class="blue b22"><svg viewBox="0 0 16 16"><path d="M4 0v16M8 0v16M12 0v16M0 4h16M0 8h16M0 12h16" stroke="#f0f0f0" stroke-width="1.300"/></svg></i><svg viewBox="0 0 16 16" class="c26"><path d="M2 2.500h14M2 8h14M2 13.500h14" stroke="#dcdcdc" stroke-width="1.800" stroke-dasharray="1.800 3.800"/></svg><svg class="dn" viewBox="0 0 8 5"><use href="#dn"/></svg></div>
    <div class="sg s3"><svg viewBox="0 0 16 16"><path d="M1 0v15h15M1 10h5v5" fill="none" stroke="#dcdcdc" stroke-width="1.200"/></svg>
      <svg viewBox="0 0 16 16"><path d="M13 8a6 6 0 11-3-5M7 9l7-8M7 9h9" fill="none" stroke="#dcdcdc" stroke-width="1.200"/></svg><svg class="dn" viewBox="0 0 8 5"><use href="#dn"/></svg>
      <svg viewBox="0 0 16 16"><path d="M8 0v16" stroke="#6ccf8e" stroke-width="1.200"/><path d="M2 2l12 12" stroke="#d8607a" stroke-width="1.200"/><path d="M7 7h3v3H7z" fill="#ddd"/></svg><svg class="dn" viewBox="0 0 8 5"><use href="#dn"/></svg></div>
    <div class="sg s4"><svg viewBox="0 0 16 16"><path d="M14 1L1 14.500h15" fill="none" stroke="#dcdcdc" stroke-width="1.200"/><path d="M5 8.500h4v4" stroke="#dcdcdc" fill="none"/></svg><i class="blue b22"><svg viewBox="0 0 16 16"><path d="M5 2.500h10.500v13H2V6" fill="none" stroke="#fff" stroke-width="1.200"/><path d="M.5.500h4v4h-4z" fill="none" stroke="#fff"/></svg></i><svg class="dn" viewBox="0 0 8 5"><use href="#dn"/></svg></div>
    <div class="sg s5"><i class="blue b22"><svg viewBox="0 0 16 16"><path d="M7 1L5 8 0 16l7-4 7 4-5-8z" fill="#fff"/><circle cx="13" cy="4" r="2.500" fill="none" stroke="#fff"/></svg></i><svg viewBox="0 0 16 16"><path d="M7 1L5 8 0 16l7-4 7 4-5-8z" fill="#c8cacd"/><path d="M14 0l-4 5h2.500L11 9l5-5.500h-2.500z" fill="#f0f0f0"/></svg><svg viewBox="0 0 16 16"><path d="M8 1L6 8 1 16l7-4 7 4-5-8z" fill="#c8cacd"/></svg><span>1:1</span><svg class="dn" viewBox="0 0 8 5"><use href="#dn"/></svg></div>
    <div class="sg s6"><svg viewBox="0 0 16 16"><circle cx="8" cy="8" r="4.500" fill="none" stroke="#dcdcdc" stroke-width="3.200"/><path d="M8 0v3M8 13v3M0 8h3M13 8h3M2.300 2.300l2 2M11.700 11.700l2 2M13.700 2.300l-2 2M4.300 11.700l-2 2" stroke="#dcdcdc" stroke-width="2.800"/></svg><svg class="dn" viewBox="0 0 8 5"><use href="#dn"/></svg></div>
    <div class="sg s7"><svg viewBox="0 0 16 16"><path d="M8 0v16M0 8h16" stroke="#dcdcdc" stroke-width="1.800"/></svg></div>
    <div class="sg s8"><svg viewBox="0 0 16 16" fill="none" stroke="#dcdcdc" stroke-width="1.200"><path d="M1 1h5v5.500H1zM7 10l3 5H4z"/><circle cx="12.500" cy="6" r="2.800"/></svg></div>
    <div class="sg s9"><svg viewBox="0 0 16 16"><path d="M1 1h11l2 3v9H6V8H1z" fill="#3b83c0"/><path d="M2 5h7M5.500 1v9" stroke="#fff" stroke-width="1.200"/><path d="M0 9h6v6H0z" fill="#fbb93a"/><path d="M6 11l3 4 7-7" fill="none" stroke="#35b04a" stroke-width="2.400"/></svg></div>
    <div class="sg s10"><svg viewBox="0 0 16 14" class="fs"><path d="M.6.600h14.800v12H.6z" fill="none" stroke="#dcdcdc" stroke-width="1.200"/><path d="M9 6l3.500-3.500M9.500 3h3v3M7 7.500L3.500 11M3.500 7.500V11h3" fill="none" stroke="#dcdcdc"/></svg><svg viewBox="0 0 16 16"><path d="M0 2h16M0 8h16M0 14h16" stroke="#dcdcdc" stroke-width="2"/></svg></div>
  </div>
</footer>

<footer class="taskbar">
  <div class="start"><svg viewBox="0 0 16 16" width="16" height="16"><path d="M0 2.300L6.700 1.300v6.200H0zM7.500 1.200L16 0v7.500H7.500zM0 8.400h6.700v6.200L0 13.700zM7.500 8.400H16V16l-8.500-1.200z" fill="#fff"/></svg></div>
  <div class="search"><svg viewBox="0 0 17 17" width="17" height="17"><circle cx="10.500" cy="6.300" r="5.300" fill="none" stroke="#e6e6e6" stroke-width="1.300"/><path d="M6.700 10L.7 16" stroke="#e6e6e6" stroke-width="1.300"/></svg><span>Type here to search</span></div>
  <div class="apps">
    <div class="app"><svg viewBox="0 0 24 24"><circle cx="12" cy="12" r="6.700" fill="none" stroke="#fff" stroke-width="2"/></svg></div>
    <div class="app"><svg viewBox="0 0 24 24"><path d="M4 4v3h10V4M4 20v-3h10v3M4 9h10v6H4zM18 4v3M18 11v9" fill="none" stroke="#fff" stroke-width="1.200"/><path d="M16.800 8h2.500v2.500h-2.500z" fill="#fff"/></svg></div>
    <div class="app run"><svg viewBox="0 0 24 24"><path d="M1 3h9l2 2v4H1z" fill="#e0a030"/><path d="M1 5h22v15H1z" fill="#fbd765"/><path d="M5 21v-7q0-1 1-1h12q1 0 1 1v7h-4v-3.500H9V21z" fill="#3a8fd0"/></svg></div>
    <div class="app run"><svg viewBox="0 0 24 24"><circle cx="12" cy="12" r="11" fill="#f8c73d"/><path d="M2.500 6.500A11 11 0 0121.500 6.500H12A5.500 5.500 0 007 9.500z" fill="#dd4b3e"/><path d="M2.500 6.500L7.300 14.800A5.500 5.500 0 0013 17.400L10.500 22.900A11 11 0 012.500 6.500z" fill="#2d9f58"/><circle cx="12" cy="12" r="5.300" fill="#fff"/><circle cx="12" cy="12" r="4.200" fill="#4a8af4"/></svg></div>
    <div class="app"><svg viewBox="0 0 24 24"><path d="M2 2.500L16 1l6 4v17H6l-4-5z" fill="#fff" stroke="#111"/><path d="M6 6.500l16-1V22H6z" fill="#fff" stroke="#111" stroke-width="1.500"/><text x="8.500" y="19" class="nn">N</text></svg></div>
    <div class="app"><svg viewBox="0 0 24 24"><path d="M14.500 2.200A10.400 10.400 0 1022.300 12" fill="none" stroke="#4a74dc" stroke-width="2.600"/><path d="M7.500 10.500l5 4.500 8-9.500" fill="none" stroke="#fbb521" stroke-width="2.900"/></svg></div>
    <div class="app run"><svg viewBox="0 0 24 24"><defs><linearGradient id="mg" x1="0" y1="0" x2="0" y2="1"><stop offset="0" stop-color="#f5935c"/><stop offset="1" stop-color="#8d5fc4"/></linearGradient></defs><circle cx="12" cy="12" r="9" fill="#3c3c3e"/><path d="M20 4.500A11 11 0 1022.500 9l-3-1" fill="none" stroke="url(#mg)" stroke-width="2"/><circle cx="12" cy="12" r="4.300" fill="#f2f2f2"/><circle cx="12" cy="12" r="1.300" fill="#333"/></svg></div>
    <div class="app run active"><svg viewBox="0 0 24 24"><path d="M0 0h24v24H0z" fill="#fbf1ec"/><path d="M0 0h8l-4 24H0z" fill="#f3d2c6"/><path d="M4 20L10 2h5l5 18h-4.500l-1-4H10l-2 4z" fill="#b5202c"/><path d="M10.800 12.500h3L12.800 7z" fill="#fbf1ec"/></svg></div>
    <div class="app run"><svg viewBox="0 0 24 24"><path d="M1 1h22v20H1z" fill="#c80a0a"/><path d="M1 12h22v9H1z" fill="#a00808"/><path d="M6 17c5-3 7-8 6-11-1.500-1.500-2 3 1 6.500 2 2.500 6 3 6 1.500s-8-.5-13 3z" fill="none" stroke="#fff" stroke-width="1.300"/></svg></div>
  </div>
  <div class="tray">
    <svg class="t1" viewBox="0 0 12 8" width="12" height="8"><path d="M.8 7L6 1.500 11.200 7" fill="none" stroke="#fff" stroke-width="1.400"/></svg>
    <svg class="t2" viewBox="0 0 16 12" width="16" height="12"><path d="M4 11.500a3.700 3.700 0 01-.5-7A4.700 4.700 0 0112 3.500a4 4 0 010 8z" fill="#b4b4b4"/><path d="M3.500 11.500L2 8l7-3 7 4-2 2.500z" fill="#fff"/></svg>
    <svg class="t3" viewBox="0 0 14 14" width="14" height="14"><path d="M1 12A11.500 11.500 0 0112.500 1M4 13A9 9 0 0112.500 4.500M7 13A6 6 0 0112.500 8" fill="none" stroke="#d0d0d0" stroke-width="1.200"/><circle cx="11.500" cy="12" r="1.500" fill="#fff"/></svg>
    <svg class="t4" viewBox="0 0 17 14" width="17" height="14"><path d="M.7 4.700h3L7.500 1.500v11L3.700 9.300h-3z" fill="none" stroke="#fff" stroke-width="1.200"/><path d="M9.500 5c1 1.200 1 2.800 0 4M11.700 3c2 2.400 2 5.600 0 8" fill="none" stroke="#fff" stroke-width="1.200"/><path d="M14 1c3 3.600 3 8.400 0 12" fill="none" stroke="#999" stroke-width="1.200"/></svg>
    <span class="eng">ENG</span>
    <div class="clock"><span>01:56 PM</span><span>28-04-2021</span></div>
    <div class="action"><svg viewBox="0 0 16 16" width="16" height="16"><path d="M0 0h16v12H9l-4 4v-4H0z" fill="#fff"/><path d="M3 3h10M3 6h10M3 9h6" stroke="#1c1a24" stroke-width="1.200"/></svg><b>1</b></div>
  </div>
</footer>
<script src="script.js"></script>
</body>
</html>
```

FILE: styles.css
```css
* { box-sizing: border-box; }
body {
  margin: 0;
  width: 1920px;
  height: 1080px;
  overflow: hidden;
  display: flex;
  flex-direction: column;
  background: #222831;
  color: #e6e8ea;
  font: 11.3px/14px "Noto Sans", "Open Sans", sans-serif;
  white-space: nowrap;
}
svg { display: block; flex: none; }
.defs { position: absolute; }
i { font-style: normal; flex: none; }
.dn { width: 8px; height: 5px; }
.dn.s { width: 6px; height: 4px; }
.dim { opacity: .5; }

/* title bar */
.titlebar { position: relative; height: 28px; display: flex; align-items: flex-start; background: #222831; }
.topline { position: absolute; left: 840px; top: 0; width: 240px; height: 1px; background: linear-gradient(90deg, #1f77b8 48px, #14181e 48px); }
.qat { width: 740px; height: 22px; display: flex; align-items: center; padding-left: 4px; }
.logo { margin-right: 5px; }
.q { width: 17px; height: 17px; margin-right: 7px; }
.q-new { margin-left: 16px; }
.q-undo, .q-undo + .dn + .q { margin-right: 6px; }
.q-undo + .dn { margin-right: 9px; }
.cust { margin: 0 8px 0 7px; }
.plane { margin-right: 4px; }
.share { color: #90cdf8; font-size: 11.500px; }
.apptitle { width: 606px; display: flex; gap: 12px; padding-top: 5px; font-size: 11.500px; letter-spacing: -.08px; }
.infocenter { height: 22px; width: 503px; display: flex; align-items: center; }
.keyword { width: 178px; height: 20px; margin: 0 5px 1px 6px; background: #454e60; color: #bcc1ca; font-style: italic; line-height: 20px; padding-left: 3px; font-size: 11.200px; }
.mag { margin-left: -1px; }
.user { margin: 0 5px 0 8px; }
.uname { width: 71px; font-size: 11.400px; }
.uname + .dn { margin: 0 12px 0 13px; }
.adsk { margin: 0 7px 0 8px; }
.vsep { width: 1px; height: 20px; background: #555c68; margin: 0 9px 0 8px; }
.help { width: 16px; height: 16px; border-radius: 8px; background: #dcdcdc; color: #222831; font-weight: 700; text-align: center; line-height: 16px; font-size: 12px; margin-right: 7px; }
.winbtns { display: flex; gap: 13px; padding-top: 6px; margin-left: 2px; }

/* ribbon tabs */
.ribtabs { height: 20px; display: grid; grid-template-columns: 51px 50px 69px 77px 45px 63px 58px 62px 81px 89px 96px 60px; padding-left: 4px; text-align: center; line-height: 20px; color: #b4b9c1; font-size: 11.600px; }
.ribtabs .on { background: #3b4453; color: #f2f2f2; }
.ribmin { display: flex; align-items: center; gap: 4px; padding: 2px 0 0 21px; }

/* ribbon */
.ribbon { height: 99px; display: flex; background: #3b4453; margin: 0 2px 0 1px; font-size: 11.500px; }
.panel { display: flex; flex-direction: column; border-right: 1px solid #252c36; }
.p-draw { width: 225px; }
.p-modify { width: 250px; }
.p-anno { width: 189px; }
.p-layers { width: 273px; }
.p-block { width: 161px; }
.p-props { width: 265px; }
.p-groups { width: 69px; }
.p-utils { width: 97px; }
.p-clip { width: 80px; }
.p-view { flex: 1; border-right: 0; }
.body { height: 77px; padding-top: 5px; display: flex; }
.ptitle { height: 22px; display: flex; align-items: center; justify-content: center; gap: 7px; padding-top: 1px; }
.has-launch { padding-right: 8px; position: relative; }
.has-launch .launch { position: absolute; right: 4px; top: 8px; }
.launch { width: 7px; height: 7px; }
.p-view .ptitle { justify-content: flex-start; padding-left: 5px; gap: 6px; }
.big { display: flex; flex-direction: column; align-items: center; text-align: center; padding-top: 3px; flex: none; line-height: 15px; }
.big > svg:first-child { width: 32px; height: 32px; margin-bottom: 3px; }
.big .dn { margin-top: 2px; }
.big.up { padding-top: 1px; }
.bigA { height: 35px; font: bold 38px/34px "Noto Sans", sans-serif; color: #dcdcdc; }
.big span { display: flex; justify-content: center; width: 0; }
.w42 { width: 44px; } .w44 { width: 43px; } .w56 { width: 56px; } .w36 { width: 36px; }
.w48 { width: 48px; } .w57 { width: 57px; } .w64 { width: 63px; } .w38 { width: 43px; margin-right: -5px; }
.w65 { width: 65px; } .w43 { width: 43px; } .w72c { width: 72px; } .w55 { width: 54px; } .w62 { width: 62px; }
.w72 { width: 72px; } .w69 { width: 69.500px; } .w76 { width: 75.500px; }
.row { height: 24px; display: flex; align-items: center; padding-left: 6.500px; position: relative; }
.row > svg:first-child { width: 16px; height: 16px; margin-right: 5.500px; }
.r-draw .row > svg:first-child { margin-right: 6px; }
.w76 .row, .rows .row { width: 100%; }
.e, .e2, .e3 { margin-left: auto; }
.e { margin-right: 7px; }
.p-anno .rows { width: 84px; padding-left: 1px; }
.e2 { margin-right: 7px; }
.e-lin { margin-right: 10px; }
.p-block .rows { width: 121px; }
.e3 { margin-right: 5px; }
.r-c24 { width: 25px; } .r-c24 .row { padding: 0; width: 24px; justify-content: center; }
.r-c24 .row > svg:first-child { margin: 0 1px 0 0; }
.r-c24 .sel { outline: 1px solid #7cc4f8; outline-offset: -1px; background: #3f5f82; height: 22px; margin: 1px 0 0 -1px; }
.r-c20 { width: 20px; } .r-c20 .row { padding: 0; justify-content: center; }
.r-c20 .row > svg:first-child { margin: 0; }
.combo { height: 22px; background: #4b5668; border: 1px solid #2c333f; display: flex; align-items: center; }
.combo .end { margin-left: auto; margin-right: 1px; }
.layercombo { width: 208px; padding-left: 5px; gap: 5px; margin: 1px 0 1px -1px; }
.layercombo .swatch { margin-left: 0; }
.swatch { width: 14px; height: 14px; background: #fff; border: 1px solid #111; }
.lrow { height: 24px; display: flex; align-items: center; gap: 8px; padding-left: 3px; }
.lrow svg { width: 16px; height: 16px; }
.lrow span { margin-left: -3px; }
.icons3 { width: 17px; display: flex; flex-direction: column; gap: 8px; padding-top: 3px; margin-left: -1px; margin-right: 1px; }
.icons3 svg { width: 16px; height: 16px; }
.wheel { width: 16px; height: 16px; border-radius: 50%; background: conic-gradient(#f28c4a 0 60deg, #e8596a 60deg 120deg, #b05fd8 120deg 180deg, #4f7fe0 180deg 220deg, #35b8a8 220deg 280deg, #6cc35a 280deg 320deg, #f4d14a 320deg); }
.combos { width: 180px; padding-top: 1px; display: flex; flex-direction: column; gap: 1.500px; }
.combos .combo { padding-left: 3px; padding-right: 1px; }
.big2 { width: 16px; height: 16px; margin: 0 10px 0 9px; border-color: #aaa; }
.ln { width: 64px; height: 1px; background: #fff; margin-right: 2px; }

/* document tabs */
.filetabs { height: 30px; display: flex; padding: 4px 0 0 20px; border-bottom: 4px solid #3b4453; gap: 2px; font-size: 11.500px; color: #c0c4ca; }
.ftab { height: 22px; background: #2f3743; border-radius: 8px 8px 0 0; display: flex; align-items: center; justify-content: space-between; padding-top: 1px; }
.ftab > svg { width: 9px; height: 9px; }
.ft1 { width: 123px; padding-left: 11px; border-radius: 10px 8px 8px 10px; }
.ft2 { width: 164px; padding: 1px 12px 0 10px; border-radius: 8px; }
.ft3 { width: 121px; padding: 1px 12px 0 9px; border-radius: 8px; }
.ft4 { width: 125px; padding: 1px 16px 0 9px; font-size: 11.300px; }
.ftab.on { background: #3b4453; color: #fff; font-weight: 700; }
.plus { justify-content: center; }
.ftab.plus { width: 22px; height: 15px; margin: 4px 0 0 2px; padding: 0; justify-content: center; border-radius: 3px 3px 8px 8px; }
.pl { width: 9px; height: 9px; background: linear-gradient(#a9aeb6, #a9aeb6) 50% 50% / 9px 2px no-repeat, linear-gradient(#a9aeb6, #a9aeb6) 50% 50% / 2px 9px no-repeat; }

/* drawing area */
.viewport { position: relative; height: 834px; background: #212830; }
.vc { font: 12px "Noto Sans", sans-serif; fill: #e6e8ea; }
.head { font: 28px "Liberation Sans", Arial, sans-serif; fill: #fff; }
.sub { font: 24.500px "Liberation Sans", Arial, sans-serif; fill: #fff; }
.pt { font: 8px "Liberation Sans", Arial, sans-serif; fill: #e0e2e4; }
.ucs { font: 18px "Liberation Sans", Arial, sans-serif; fill: #e8e8e8; }
.tb { font: 36.500px "Liberation Sans", Arial, sans-serif; fill: #fff; stroke: #fff; stroke-width: 1.200px; }
.tbh { font-size: 42px; }
.cube { font: bold 12px "Noto Sans", sans-serif; fill: #4c5158; }
.nesw { font: bold 21px "Liberation Sans", Arial, sans-serif; fill: #b0b2b4; text-anchor: middle; }
.wcs { font: 11px "Liberation Sans", Arial, sans-serif; fill: #4c515c; }
.history { position: absolute; left: 173px; top: 749px; display: flex; flex-direction: column; gap: 5px; font: 11.500px/16px "DejaVu Sans Mono", monospace; }
.history span { width: 60px; height: 15px; background: #4b4f53; border-radius: 2px; padding-left: 2px; color: #a0a2a4; }
.history span:nth-child(2) { background: #535659; color: #c0c2c4; }
.history span:nth-child(3) { background: #5a5c5f; color: #f0f0f0; }
.cmd { position: absolute; left: 111px; top: 808px; width: 1332px; height: 25px; display: flex; align-items: center; background: #2a303a; }
.grip { width: 6px; height: 18px; margin: 0 4px 0 4px; background: repeating-linear-gradient(#2a303a 0 1px, transparent 1px 3px), repeating-linear-gradient(90deg, #a0a4aa 0 1px, #2a303a 1px 2px); }
.wrench { margin: 3px 6px 0 12px; }
.cmdin { flex: 1; height: 25px; background: rgba(204, 204, 204, .92); border-radius: 2px; display: flex; align-items: center; padding: 0 3px 0 4px; color: #5c5c5c; font: italic 11.500px/25px "DejaVu Sans Mono", monospace; }
.cmdin span { margin-left: 7px; }
.dk { margin-left: 2px; }
.dk.up { margin-left: auto; }

/* layout tabs and status bar */
.layoutbar { height: 29px; background: #222831; border-top: 1px solid #454c57; display: flex; justify-content: space-between; font-size: 11.500px; }
.ltabs { display: flex; gap: 4px; padding-left: 13px; color: #b4b8bf; height: 17px; line-height: 16px; text-align: center; }
.lt { width: 61px; background: #2f3743; border-radius: 0 0 7px 7px; }
.lt.on { width: 55px; background: #3b4453; color: #fff; font-weight: 700; }
.lt.plus { width: 22px; display: flex; align-items: center; height: 15px; margin-left: 2px; }
.status { display: flex; padding: 1px 2px 2px 0; }
.sg { height: 24px; background: #363f4c; display: flex; align-items: center; }
.sg > svg:not(.dn), .blue svg { width: 16px; height: 16px; }
.blue { width: 22px; height: 24px; background: #4e82bb; display: flex; align-items: center; justify-content: center; }
.s1 { width: 47px; justify-content: center; margin-right: 4px; color: #f0f0f0; font-size: 12px; letter-spacing: -.3px; }
.s2 { width: 63px; margin-right: 3px; } .c26 { margin: 0 8px 0 5px; }
.s3 { width: 104px; padding-left: 4px; margin-right: 1px; gap: 7px; }
.s3 .dn { margin: 0 2px 0 0; }
.s4 { width: 65px; padding-left: 4px; gap: 5px; margin-right: 3px; }
.s5 { width: 105px; gap: 7px; margin-right: 3px; }
.s5 span { letter-spacing: -.3px; font-size: 12px; } .s5 .dn { margin-left: -4px; }
.s6 { width: 41px; padding-left: 4px; gap: 8px; margin-right: 1px; }
.s7 { width: 24px; justify-content: center; margin-right: 3px; }
.s8 { width: 25px; justify-content: center; margin-right: 2px; }
.s9 { width: 22px; justify-content: center; margin-right: 3px; }
.s10 { width: 48px; padding: 0 4px; justify-content: space-between; }
.sg .fs { height: 14px !important; }

/* Windows taskbar */
.taskbar { height: 40px; display: flex; background: linear-gradient(90deg, #1a1b29, #1b1c30 25%, #1a1e31 50%, #1a2032 65%, #1d1a2b 82%, #1e1b24); }
.start { width: 48px; display: flex; align-items: center; justify-content: center; }
.search { width: 344px; background: #333; border: 1px solid #5a5a5a; display: flex; align-items: center; gap: 12px; padding: 1px 0 0 11px; color: #d2d2d2; font-size: 14.300px; line-height: 20px; }
.apps { display: flex; gap: 1.150px; }
.app { width: 48px; display: flex; align-items: center; justify-content: center; position: relative; }
.app svg { width: 24px; height: 24px; }
.run::after { content: ""; position: absolute; left: 4px; right: 4px; bottom: 0; height: 2px; background: #76b9ed; }
.active { background: linear-gradient(90deg, #484a5a 44px, #1e2030 44px 45px, #3c3e4e 45px); }
.active::after { left: 0; right: 0; }
.nn { font: bold 13px "Liberation Serif", serif; fill: #111; }
.tray { margin-left: auto; width: 250px; display: flex; align-items: center; color: #fff; font-size: 11.500px; }
.t1 { margin-left: 1px; margin-right: 10px; } .t2 { margin-right: 9px; } .t3 { margin-right: 8px; } .t4 { margin-right: 10px; }
.eng { width: 24px; font-size: 11.300px; letter-spacing: -.2px; }
.clock { width: 81px; display: flex; flex-direction: column; text-align: center; line-height: 18px; font-size: 11.300px; letter-spacing: -.2px; }
.action { position: relative; margin-left: 8px; }
.action b { position: absolute; left: 7px; top: 7px; width: 16px; height: 16px; border-radius: 8px; border: 1px solid #999; background: #2a2a30; font: 11px/14px "Noto Sans", sans-serif; text-align: center; }
```

FILE: script.js
```js
// Model-space grid: minor lines every fifth of a major step.
const STEP = 19.91;
const OX = 733.3, OY = 974.0;
const minor = [], major = [];
for (let i = -37; i < 61; i++) {
  const x = Math.floor(OX + i * STEP) + 0.5;
  if (x < 0 || x > 1920) continue;
  (i % 5 === 0 ? major : minor).push(`M${x} 177v834`);
}
for (let j = -40; j < 2; j++) {
  const y = Math.floor(OY + j * STEP) + 0.5;
  if (y < 177) continue;
  (j % 5 === 0 ? major : minor).push(`M0 ${y}h1920`);
}
document.getElementById('minor').setAttribute('d', minor.join(''));
document.getElementById('major').setAttribute('d', major.join(''));

// Point markers on both branches of the curve.
const pts = [[893.5, 595.5], [913.5, 557.5], [933.5, 525.5], [953.5, 497.5], [973.5, 470.5],
  [893.5, 755.5], [913.5, 793.5], [933.5, 824.5], [953.5, 853.5], [973.5, 880.5]];
document.getElementById('marks').innerHTML = pts.map(([x, y]) =>
  `<path d="M${x - 6} ${y}h12M${x} ${y - 6}v12"/><circle cx="${x}" cy="${y}" r="2.800"/>`).join('');
```
